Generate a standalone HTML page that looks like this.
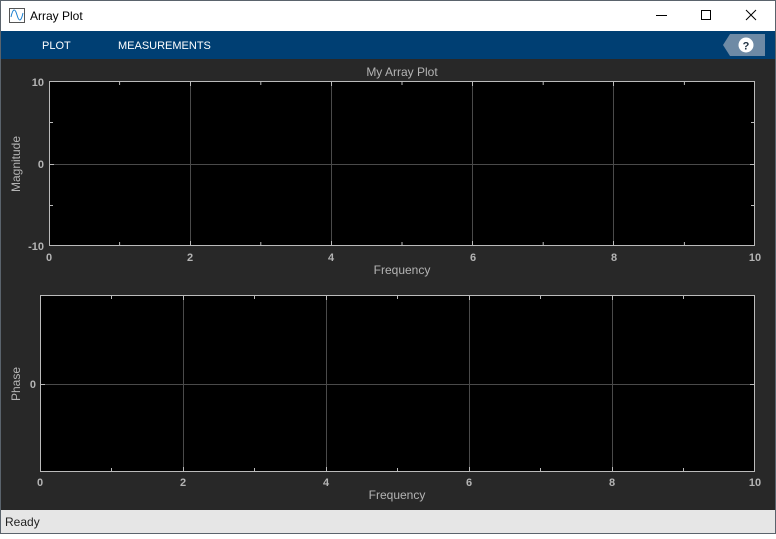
<!DOCTYPE html>
<html><head><style>
body{margin:0;width:776px;height:534px;overflow:hidden;font-family:"Liberation Sans",sans-serif;}
</style></head><body>
<svg width="776" height="534" xmlns="http://www.w3.org/2000/svg" font-family="Liberation Sans, sans-serif">
<rect x="0" y="0" width="776" height="534" fill="#5a636c"/>
<rect x="1" y="1" width="774" height="30" fill="#fff"/>
<g stroke="#1a6fb0" fill="none" stroke-width="1">
<rect x="9.5" y="8.5" width="15" height="14" stroke="#555"/>
<path d="M11 17 C13 8,15 8,17 15 S21 22,23 13" stroke="#1a7fd0"/>
</g>
<text x="30" y="20" font-size="12" fill="#000">Array Plot</text>
<line x1="656" y1="15.5" x2="667" y2="15.5" stroke="#000"/>
<rect x="701.5" y="10.5" width="9" height="9" fill="none" stroke="#000"/>
<path d="M746 10 L756 20 M756 10 L746 20" stroke="#000"/>
<rect x="1" y="31" width="774" height="28" fill="#003f73"/>
<text x="42" y="49" font-size="11" fill="#fff">PLOT</text>
<text x="118" y="49" font-size="11" fill="#fff">MEASUREMENTS</text>
<path d="M730 34 L765 34 L765 56 L730 56 L723 45 Z" fill="#6e8aa5"/>
<circle cx="746" cy="45" r="7.5" fill="#fff"/>
<text x="746" y="49.5" font-size="11" font-weight="bold" fill="#234" text-anchor="middle">?</text>
<rect x="1" y="59" width="774" height="451" fill="#282828"/>
<rect x="1" y="510" width="774" height="23" fill="#e6e6e6"/>
<text x="5" y="526" font-size="12" fill="#222">Ready</text>
<!-- plot 1 -->
<rect x="49" y="81" width="706" height="165" fill="#000"/>
<g stroke="#4a4a4a" stroke-width="1">
<line x1="190.5" y1="81" x2="190.5" y2="246"/><line x1="331.5" y1="81" x2="331.5" y2="246"/>
<line x1="472.5" y1="81" x2="472.5" y2="246"/><line x1="613.5" y1="81" x2="613.5" y2="246"/>
<line x1="49" y1="164.5" x2="755" y2="164.5"/>
</g>
<g stroke="#bbb" stroke-width="1">
<rect x="49.5" y="81.5" width="705" height="164" fill="none"/>
<path d="M119.6 81v4M260.8 81v4M402 81v4M543.2 81v4M684.4 81v4M119.6 246v-4M260.8 246v-4M402 246v-4M543.2 246v-4M684.4 246v-4M190.5 81v5M331.5 81v5M472.5 81v5M613.5 81v5M190.5 246v-5M331.5 246v-5M472.5 246v-5M613.5 246v-5M49 122.5h4M49 205.5h4M755 122.5h-4M755 205.5h-4M49 164.5h5M755 164.5h-5"/>
</g>
<g font-size="11" fill="#b4b4b4">
<text x="402" y="76" text-anchor="middle" font-size="12">My Array Plot</text>
<g font-weight="bold">
<text x="44" y="86" text-anchor="end">10</text>
<text x="44" y="168" text-anchor="end">0</text>
<text x="44" y="250" text-anchor="end">-10</text>
<text x="49" y="261" text-anchor="middle">0</text><text x="190" y="261" text-anchor="middle">2</text>
<text x="331" y="261" text-anchor="middle">4</text><text x="473" y="261" text-anchor="middle">6</text>
<text x="614" y="261" text-anchor="middle">8</text><text x="755" y="261" text-anchor="middle">10</text>
</g>
<text x="402" y="274" text-anchor="middle" font-size="12">Frequency</text>
<text transform="translate(20,164) rotate(-90)" text-anchor="middle" font-size="12">Magnitude</text>
</g>
<!-- plot 2 -->
<rect x="40" y="295" width="715" height="177" fill="#000"/>
<g stroke="#4a4a4a" stroke-width="1">
<line x1="183.5" y1="295" x2="183.5" y2="472"/><line x1="326.5" y1="295" x2="326.5" y2="472"/>
<line x1="469.5" y1="295" x2="469.5" y2="472"/><line x1="612.5" y1="295" x2="612.5" y2="472"/>
<line x1="40" y1="384.5" x2="755" y2="384.5"/>
</g>
<g stroke="#bbb" stroke-width="1">
<rect x="40.5" y="295.5" width="714" height="176" fill="none"/>
<path d="M111.5 295v4M254.5 295v4M397.5 295v4M540.5 295v4M683.5 295v4M111.5 472v-4M254.5 472v-4M397.5 472v-4M540.5 472v-4M683.5 472v-4M183.5 295v5M326.5 295v5M469.5 295v5M612.5 295v5M183.5 472v-5M326.5 472v-5M469.5 472v-5M612.5 472v-5M40 384.5h5M755 384.5h-5"/>
</g>
<g font-size="11" fill="#b4b4b4">
<g font-weight="bold">
<text x="36" y="388" text-anchor="end">0</text>
<text x="40" y="486" text-anchor="middle">0</text><text x="183" y="486" text-anchor="middle">2</text>
<text x="326" y="486" text-anchor="middle">4</text><text x="469" y="486" text-anchor="middle">6</text>
<text x="612" y="486" text-anchor="middle">8</text><text x="755" y="486" text-anchor="middle">10</text>
</g>
<text x="397" y="499" text-anchor="middle" font-size="12">Frequency</text>
<text transform="translate(20,384) rotate(-90)" text-anchor="middle" font-size="12">Phase</text>
</g>
</svg>
</body></html>
